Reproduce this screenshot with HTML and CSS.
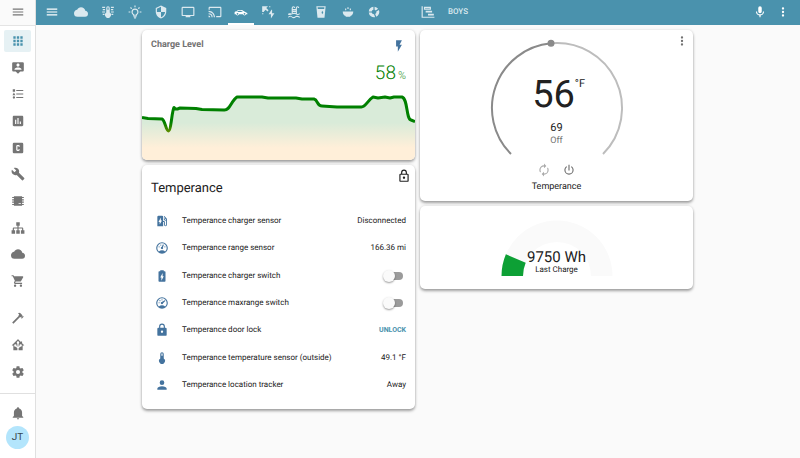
FILE: index.html
```html
<!DOCTYPE html>
<html lang="en">
<head>
<meta charset="utf-8">
<title>Temperance</title>
<meta name="viewport" content="width=device-width, initial-scale=1">
<link rel="stylesheet" href="styles.css">
</head>
<body>
<svg class="sprite" aria-hidden="true">
  <symbol id="menu" viewBox="0 0 24 24"><path d="M3,6H21V8H3V6M3,11H21V13H3V11M3,16H21V18H3V16Z"/></symbol>
  <symbol id="cloud" viewBox="0 0 24 24"><path d="M19.35,10.03C18.67,6.59 15.64,4 12,4C9.11,4 6.6,5.64 5.35,8.03C2.34,8.36 0,10.9 0,14A6,6 0 0,0 6,20H19A5,5 0 0,0 24,15C24,12.36 21.95,10.22 19.35,10.03Z"/></symbol>
  <symbol id="dots" viewBox="0 0 24 24"><path d="M12,16A2,2 0 0,1 14,18A2,2 0 0,1 12,20A2,2 0 0,1 10,18A2,2 0 0,1 12,16M12,10A2,2 0 0,1 14,12A2,2 0 0,1 12,14A2,2 0 0,1 10,12A2,2 0 0,1 12,10M12,4A2,2 0 0,1 14,6A2,2 0 0,1 12,8A2,2 0 0,1 10,6A2,2 0 0,1 12,4Z"/></symbol>
  <symbol id="gauge" viewBox="0 0 24 24"><path d="M12,2A10,10 0 0,0 2,12A10,10 0 0,0 12,22A10,10 0 0,0 22,12A10,10 0 0,0 12,2M12,4A8,8 0 0,1 20,12C20,14.4 19,16.5 17.3,18C15.9,16.7 14,16 12,16C10,16 8.2,16.7 6.7,18C5,16.5 4,14.4 4,12A8,8 0 0,1 12,4M14,5.89C13.62,5.9 13.26,6.15 13.1,6.54L11.81,9.77L11.71,10C11,10.13 10.41,10.6 10.14,11.26C9.73,12.29 10.23,13.45 11.26,13.86C12.29,14.27 13.45,13.77 13.86,12.74C14.12,12.08 14,11.32 13.57,10.76L13.67,10.5L14.96,7.29L14.97,7.26C15.17,6.75 14.92,6.17 14.41,5.96C14.28,5.91 14.15,5.89 14,5.89M10,6A1,1 0 0,0 9,7A1,1 0 0,0 10,8A1,1 0 0,0 11,7A1,1 0 0,0 10,6M7,9A1,1 0 0,0 6,10A1,1 0 0,0 7,11A1,1 0 0,0 8,10A1,1 0 0,0 7,9M17,9A1,1 0 0,0 16,10A1,1 0 0,0 17,11A1,1 0 0,0 18,10A1,1 0 0,0 17,9Z"/></symbol>
  <symbol id="gauge-max" viewBox="0 0 24 24"><path d="M12,2A10,10 0 0,0 2,12A10,10 0 0,0 12,22A10,10 0 0,0 22,12A10,10 0 0,0 12,2M12,4A8,8 0 0,1 20,12C20,14.4 19,16.5 17.3,18C15.9,16.7 14,16 12,16C10,16 8.2,16.7 6.7,18C5,16.5 4,14.4 4,12A8,8 0 0,1 12,4M16.6,7.4L11.6,10.1A2,2 0 1,0 13.8,12.3L17.6,8.7A0.9,0.9 0 0,0 16.6,7.4M12,5.500A1,1 0 0,0 12,7.500A1,1 0 0,0 12,5.500M8.500,7A1,1 0 0,0 8.500,9A1,1 0 0,0 8.500,7M7,10.500A1,1 0 0,0 7,12.500A1,1 0 0,0 7,10.500Z"/></symbol>
</svg>

<div class="app">
  <aside class="sidebar">
    <button class="side-menu" type="button" aria-label="Toggle sidebar"><svg class="icon"><use href="#menu"/></svg></button>
    <nav class="side-main" aria-label="Main">
      <a class="side-item selected" href="#" aria-label="Overview"><svg class="icon" viewBox="0 0 24 24"><path d="M16,20H20V16H16M16,14H20V10H16M10,8H14V4H10M16,8H20V4H16M10,14H14V10H10M4,14H8V10H4M4,20H8V16H4M10,20H14V16H10M4,8H8V4H4V8Z"/></svg></a>
      <a class="side-item" href="#" aria-label="Map"><svg class="icon" viewBox="0 0 24 24"><path d="M20,2H4A2,2 0 0,0 2,4V16A2,2 0 0,0 4,18H8L12,22L16,18H20A2,2 0 0,0 22,16V4A2,2 0 0,0 20,2M12,4.3C13.5,4.3 14.7,5.5 14.7,7C14.7,8.5 13.5,9.7 12,9.7C10.5,9.7 9.3,8.5 9.3,7C9.3,5.5 10.5,4.3 12,4.3M18,15H6V14.1C6,12.1 10,11 12,11C14,11 18,12.1 18,14.1V15Z"/></svg></a>
      <a class="side-item" href="#" aria-label="Logbook"><svg class="icon" viewBox="0 0 24 24"><path d="M5,9.5L7.500,14H2.500L5,9.500M3,4H7V8H3V4M5,20A2,2 0 0,0 7,18A2,2 0 0,0 5,16A2,2 0 0,0 3,18A2,2 0 0,0 5,20M9,5V7H21V5H9M9,19H21V17H9V19M9,13H21V11H9V13Z"/></svg></a>
      <a class="side-item" href="#" aria-label="History"><svg class="icon" viewBox="0 0 24 24"><path d="M9,17H7V10H9V17M13,17H11V7H13V17M17,17H15V13H17V17M19,3H5C3.9,3 3,3.9 3,5V19C3,20.1 3.9,21 5,21H19C20.1,21 21,20.1 21,19V5C21,3.9 20.1,3 19,3Z"/></svg></a>
      <a class="side-item" href="#" aria-label="Community"><svg class="icon" viewBox="0 0 24 24"><path d="M5,3A2,2 0 0,0 3,5V19A2,2 0 0,0 5,21H19A2,2 0 0,0 21,19V5A2,2 0 0,0 19,3H5M11,7H13A2,2 0 0,1 15,9V10H13V9H11V15H13V14H15V15A2,2 0 0,1 13,17H11A2,2 0 0,1 9,15V9A2,2 0 0,1 11,7Z"/></svg></a>
      <a class="side-item" href="#" aria-label="Tools"><svg class="icon" viewBox="0 0 24 24"><path d="M22.7,19L13.6,9.9C14.5,7.6 14,4.9 12.1,3C10.1,1 7.1,0.6 4.7,1.7L9,6L6,9L1.6,4.7C0.4,7.1 0.9,10.1 2.9,12.1C4.8,14 7.5,14.5 9.8,13.6L18.9,22.7C19.3,23.1 19.9,23.1 20.3,22.7L22.6,20.4C23.1,20 23.1,19.3 22.7,19Z"/></svg></a>
      <a class="side-item" href="#" aria-label="Hardware"><svg class="icon" viewBox="0 0 24 24"><path d="M5,4H19V5H22V7H19V9H22V11H19V13H22V15H19V17H22V19H19V20H5V19H2V17H5V15H2V13H5V11H2V9H5V7H2V5H5ZM13,16V17H17V16Z"/></svg></a>
      <a class="side-item" href="#" aria-label="Network"><svg class="icon" viewBox="0 0 24 24"><path d="M9,2V8H11V11H5C3.89,11 3,11.89 3,13V16H1V22H7V16H5V13H11V16H9V22H15V16H13V13H19V16H17V22H23V16H21V13C21,11.89 20.11,11 19,11H13V8H15V2H9Z"/></svg></a>
      <a class="side-item" href="#" aria-label="Cloud"><svg class="icon"><use href="#cloud"/></svg></a>
      <a class="side-item" href="#" aria-label="Shopping list"><svg class="icon" viewBox="0 0 24 24"><path d="M17,18C15.89,18 15,18.89 15,20A2,2 0 0,0 17,22A2,2 0 0,0 19,20C19,18.89 18.1,18 17,18M1,2V4H3L6.6,11.59L5.24,14.04C5.09,14.32 5,14.65 5,15A2,2 0 0,0 7,17H19V15H7.42A0.25,0.25 0 0,1 7.17,14.75C7.17,14.7 7.18,14.66 7.2,14.63L8.1,13H15.55C16.3,13 16.96,12.58 17.3,11.97L20.88,5.5C20.95,5.34 21,5.17 21,5A1,1 0 0,0 20,4H5.21L4.27,2M7,18C5.89,18 5,18.89 5,20A2,2 0 0,0 7,22A2,2 0 0,0 9,20C9,18.89 8.1,18 7,18Z"/></svg></a>
    </nav>
    <nav class="side-tools" aria-label="System">
      <a class="side-item" href="#" aria-label="Developer tools"><svg class="icon" viewBox="0 0 24 24"><path d="M2,19.63L13.43,8.2L12.72,7.5L14.14,6.07L12,3.89C13.2,2.7 15.09,2.7 16.27,3.89L19.87,7.5L18.45,8.91H21.29L22,9.62L18.45,13.21L17.74,12.5V9.62L16.27,11.04L15.56,10.33L4.13,21.76L2,19.63Z"/></svg></a>
      <a class="side-item" href="#" aria-label="Supervisor"><svg class="icon" viewBox="0 0 24 24"><path d="M21.8,13H20V21H13V17.67L15.79,14.88L16.5,15C17.66,15 18.6,14.06 18.6,12.9C18.6,11.74 17.66,10.8 16.5,10.8A2.1,2.1 0 0,0 14.4,12.9L14.5,13.61L13,15.13V9.65C13.66,9.29 14.1,8.6 14.1,7.8A2.1,2.1 0 0,0 12,5.7A2.1,2.1 0 0,0 9.9,7.8C9.9,8.6 10.34,9.29 11,9.65V15.13L9.5,13.61L9.6,12.9A2.1,2.1 0 0,0 7.5,10.8A2.1,2.1 0 0,0 5.4,12.9A2.1,2.1 0 0,0 7.5,15L8.21,14.88L11,17.67V21H4V13H2.25C1.83,13 1.42,13 1.42,12.79C1.43,12.57 1.85,12.15 2.28,11.72L11,3C11.33,2.67 11.67,2.33 12,2.33C12.33,2.33 12.67,2.67 13,3L17,7V6H19V9L21.78,11.78C22.18,12.18 22.59,12.59 22.6,12.8C22.6,13 22.2,13 21.8,13Z"/></svg></a>
      <a class="side-item" href="#" aria-label="Configuration"><svg class="icon" viewBox="0 0 24 24"><path d="M12,15.5A3.5,3.5 0 0,1 8.5,12A3.5,3.5 0 0,1 12,8.5A3.5,3.5 0 0,1 15.5,12A3.5,3.5 0 0,1 12,15.5M19.43,12.97C19.47,12.65 19.5,12.33 19.5,12C19.5,11.67 19.47,11.34 19.43,11L21.54,9.37C21.73,9.22 21.78,8.95 21.66,8.73L19.66,5.27C19.54,5.05 19.27,4.96 19.05,5.05L16.56,6.05C16.04,5.66 15.5,5.32 14.87,5.07L14.5,2.42C14.46,2.18 14.25,2 14,2H10C9.75,2 9.54,2.18 9.5,2.42L9.13,5.07C8.5,5.32 7.96,5.66 7.44,6.05L4.95,5.05C4.73,4.96 4.46,5.05 4.34,5.27L2.34,8.73C2.21,8.95 2.27,9.22 2.46,9.37L4.57,11C4.53,11.34 4.5,11.67 4.5,12C4.5,12.33 4.53,12.65 4.57,12.97L2.46,14.63C2.27,14.78 2.21,15.05 2.34,15.27L4.34,18.73C4.46,18.95 4.73,19.03 4.95,18.95L7.44,17.94C7.96,18.34 8.5,18.68 9.13,18.93L9.5,21.58C9.54,21.82 9.75,22 10,22H14C14.25,22 14.46,21.82 14.5,21.58L14.87,18.93C15.5,18.67 16.04,18.34 16.56,17.94L19.05,18.95C19.27,19.03 19.54,18.95 19.66,18.73L21.66,15.27C21.78,15.05 21.73,14.78 21.54,14.63L19.43,12.97Z"/></svg></a>
    </nav>
    <div class="side-user">
      <button class="side-item" type="button" aria-label="Notifications"><svg class="icon" viewBox="0 0 24 24"><path d="M21,19V20H3V19L5,17V11C5,7.9 7.03,5.17 10,4.29C10,4.19 10,4.1 10,4A2,2 0 0,1 12,2A2,2 0 0,1 14,4C14,4.1 14,4.19 14,4.29C16.97,5.17 19,7.9 19,11V17L21,19M14,21A2,2 0 0,1 12,23A2,2 0 0,1 10,21"/></svg></button>
      <a class="avatar" href="#">JT</a>
    </div>
  </aside>

  <div class="page">
    <header class="toolbar">
      <button class="tool-button" type="button" aria-label="Menu"><svg class="icon"><use href="#menu"/></svg></button>
      <nav class="tabs" aria-label="Views">
        <a class="tab" href="#" aria-label="Weather"><svg class="icon"><use href="#cloud"/></svg></a>
        <a class="tab" href="#" aria-label="Climate"><svg class="icon" viewBox="0 0 24 24"><path d="M15,13V5A3,3 0 0,0 9,5V13A5,5 0 1,0 15,13M12,4A1,1 0 0,1 13,5V8H11V5A1,1 0 0,1 12,4M2,3H7V5H2ZM3,7H7V9H3ZM2,11H7V13H2ZM3,15H6V17H3ZM17,3H22V5H17ZM17,7H21V9H17ZM17,11H22V13H17ZM18,15H21V17H18Z"/></svg></a>
        <a class="tab" href="#" aria-label="Lights"><svg class="icon" viewBox="0 0 24 24"><path d="M20,11H23V13H20V11M1,11H4V13H1V11M13,1V4H11V1H13M4.92,3.5L7.05,5.64L5.63,7.05L3.5,4.93L4.92,3.5M16.95,5.63L19.07,3.5L20.5,4.93L18.37,7.05L16.95,5.63M12,6A6,6 0 0,1 18,12C18,14.22 16.79,16.16 15,17.2V19A1,1 0 0,1 14,20H10A1,1 0 0,1 9,19V17.2C7.21,16.16 6,14.22 6,12A6,6 0 0,1 12,6M14,21V22A1,1 0 0,1 13,23H11A1,1 0 0,1 10,22V21H14M11,18H13V15.87C14.73,15.43 16,13.86 16,12A4,4 0 0,0 12,8A4,4 0 0,0 8,12C8,13.86 9.27,15.43 11,15.87V18Z"/></svg></a>
        <a class="tab" href="#" aria-label="Security"><svg class="icon" viewBox="0 0 24 24"><path d="M12,12H19C18.47,16.11 15.72,19.78 12,20.92V12H5V6.3L12,3.19M12,1L3,5V11C3,16.55 6.84,21.73 12,23C17.16,21.73 21,16.55 21,11V5L12,1Z"/></svg></a>
        <a class="tab" href="#" aria-label="Television"><svg class="icon" viewBox="0 0 24 24"><path d="M21,17H3V5H21M21,3H3A2,2 0 0,0 1,5V17A2,2 0 0,0 3,19H8V21H16V19H21A2,2 0 0,0 23,17V5A2,2 0 0,0 21,3Z"/></svg></a>
        <a class="tab" href="#" aria-label="Cast"><svg class="icon" viewBox="0 0 24 24"><path d="M1,10V12A9,9 0 0,1 10,21H12C12,14.92 7.07,10 1,10M1,14V16A5,5 0 0,1 6,21H8A7,7 0 0,0 1,14M1,18V21H4A3,3 0 0,0 1,18M21,3H3C1.89,3 1,3.89 1,5V8H3V5H21V19H14V21H21A2,2 0 0,0 23,19V5C23,3.89 22.1,3 21,3Z"/></svg></a>
        <a class="tab current" href="#" aria-label="Car" aria-current="page"><svg class="icon" viewBox="0 0 24 24"><path d="M12,8.5H7L4,11H3C1.89,11 1,11.89 1,13V16H3.17C3.6,17.2 4.73,18 6,18C7.27,18 8.4,17.2 8.82,16H15.17C15.6,17.2 16.73,18 18,18C19.27,18 20.4,17.2 20.82,16H23V15C23,13.89 21.97,13.53 21,13L17,10.500C15.500,9.200 14,8.500 12,8.500M5.25,12L7.5,10H11.5L15.5,12H5.25M6,13.5A1.5,1.5 0 0,1 6,16.5A1.5,1.5 0 0,1 6,13.5M18,13.5A1.5,1.5 0 0,1 18,16.5A1.5,1.5 0 0,1 18,13.5Z"/></svg></a>
        <a class="tab" href="#" aria-label="Energy"><svg class="icon" viewBox="0 0 24 24"><path d="M2,2H12L9,5L13,9L11,11L8,8L5,11V12H2ZM2,14H4V16H2ZM14,2H16V4H14ZM18,8L13,16H17V23L23,14H19V8Z"/></svg></a>
        <a class="tab" href="#" aria-label="Pool"><svg class="icon" viewBox="0 0 24 24"><path d="M2,15C4,14 6,14 8,15V5A3,3 0 0,1 14,5H12A1,1 0 0,0 10,5V7H15V5A3,3 0 0,1 21,5H19A1,1 0 0,0 17,5V15C19,16 20,15 22,14V16C19,18 17,17 15,16C13,15 11,15 9,16C6,18 4,17 2,17ZM10,9V10H15V9ZM10,12V14C12,13 13,13 15,14V12ZM2,20C4,18 7,18 9,20C11,21 13,21 15,19C18,18 19,19 22,20V22C19,21 18,20 15,21C13,23 10,23 8,21C6,20 4,20 2,22Z"/></svg></a>
        <a class="tab" href="#" aria-label="Drinks"><svg class="icon" viewBox="0 0 24 24"><path fill-rule="evenodd" d="M4,2H20L18,22H6ZM6.200,4L6.500,7H17.500L17.800,4ZM14,10L13,13L14,16L16,13Z"/></svg></a>
        <a class="tab" href="#" aria-label="Food"><svg class="icon" viewBox="0 0 24 24"><path d="M3,11H21C21,15 19,18 16,19V20H8V19C5,18 3,15 3,11ZM11,4H13V7H11ZM7,6H9V9H7ZM15,6H17V9H15Z"/></svg></a>
        <a class="tab" href="#" aria-label="Usage"><svg class="icon" viewBox="0 0 24 24"><path d="M11,3V8A4,4 0 0,0 8,11H3A9,9 0 0,1 11,3M13,3A9,9 0 0,1 19,6.500L15,9.500A4,4 0 0,0 13,8ZM20.500,8.500A9,9 0 0,1 16,20L14,15.500A4,4 0 0,0 16,11ZM3,13H8A4,4 0 0,0 12,16L14,20.800A9,9 0 0,1 3,13Z"/></svg></a>
        <a class="tab" href="#" aria-label="Blank"></a>
        <a class="tab" href="#" aria-label="Timeline"><svg class="icon" viewBox="0 0 24 24"><path d="M1,2H3V20H23V22H1ZM5,3H17V8H5ZM7,5V6H15V5ZM8,10H19V13H8ZM12,15H22V18H12Z"/></svg></a>
        <a class="tab" href="#">BOYS</a>
      </nav>
      <button class="tool-button" type="button" aria-label="Voice"><svg class="icon" viewBox="0 0 24 24"><path d="M12,2A3,3 0 0,1 15,5V11A3,3 0 0,1 12,14A3,3 0 0,1 9,11V5A3,3 0 0,1 12,2M19,11C19,14.53 16.39,17.44 13,17.93V21H11V17.93C7.61,17.44 5,14.53 5,11H7A5,5 0 0,0 12,16A5,5 0 0,0 17,11H19Z"/></svg></button>
      <button class="tool-button" type="button" aria-label="More"><svg class="icon"><use href="#dots"/></svg></button>
    </header>

    <main class="board">
      <div class="column">
        <section class="card level">
          <div class="level-head">
            <h2 class="level-title">Charge Level</h2>
            <svg class="icon accent" viewBox="0 0 24 24"><path d="M7,2V13H10V22L17,10H13L17,2H7Z"/></svg>
          </div>
          <p class="level-value">58<span class="level-unit">%</span></p>
          <svg class="chart" viewBox="0 0 273 68" preserveAspectRatio="none" role="img" aria-label="Charge level history">
            <defs>
              <linearGradient id="area" x1="0" y1="0" x2="0" y2="68" gradientUnits="userSpaceOnUse">
                <stop offset="0" stop-color="#d9ebd9"/><stop offset=".45" stop-color="#d9ebd9"/><stop offset=".82" stop-color="#ffefd9"/>
              </linearGradient>
              <linearGradient id="line" x1="0" y1="0" x2="0" y2="68" gradientUnits="userSpaceOnUse">
                <stop offset="0" stop-color="#008000"/><stop offset=".45" stop-color="#008000"/><stop offset=".82" stop-color="#ffa500"/>
              </linearGradient>
            </defs>
            <path fill="url(#area)" d="M0,25.500L6,26.500L20,27C23,28 24,39 26.500,39C29,39 30,18 32,15.500C34,18 35,17 38,16L54,16.500L60,17.500L82,18C88,18.500 89,9 95,5L120,5L126,6L154,6L160,7L172,7C176,8 175,14 180,14L195,15L219,15C223,16 226,8 231,5L236,6L243,5L248,6L252,5H260C266,7 264,27 269,28L273,29.500V68H0Z"/>
            <path fill="none" stroke="url(#line)" stroke-width="3" stroke-linejoin="round" d="M0,25.500L6,26.500L20,27C23,28 24,39 26.500,39C29,39 30,18 32,15.500C34,18 35,17 38,16L54,16.500L60,17.500L82,18C88,18.500 89,9 95,5L120,5L126,6L154,6L160,7L172,7C176,8 175,14 180,14L195,15L219,15C223,16 226,8 231,5L236,6L243,5L248,6L252,5H260C266,7 264,27 269,28L273,29.500"/>
          </svg>
        </section>

        <section class="card entities">
          <div class="entities-head">
            <h2 class="entities-title">Temperance</h2>
            <svg class="icon lock" viewBox="0 0 24 24"><path d="M12,17C10.89,17 10,16.1 10,15C10,13.89 10.89,13 12,13A2,2 0 0,1 14,15A2,2 0 0,1 12,17M18,20V10H6V20H18M18,8A2,2 0 0,1 20,10V20A2,2 0 0,1 18,22H6C4.89,22 4,21.1 4,20V10C4,8.89 4.89,8 6,8H7V6A5,5 0 0,1 12,1A5,5 0 0,1 17,6V8H18M12,3A3,3 0 0,0 9,6V8H15V6A3,3 0 0,0 12,3Z"/></svg>
          </div>
          <ul class="rows">
            <li class="row"><svg class="icon accent" viewBox="0 0 24 24"><path d="M19.77,7.23L19.78,7.22L16.06,3.5L15,4.56L17.11,6.67C16.17,7.03 15.5,7.93 15.5,9A2.5,2.5 0 0,0 18,11.5C18.36,11.5 18.69,11.42 19,11.29V18.5A1,1 0 0,1 18,19.5A1,1 0 0,1 17,18.5V14A2,2 0 0,0 15,12H14V5A2,2 0 0,0 12,3H6A2,2 0 0,0 4,5V21H14V13.5H15.5V18.5A2.5,2.5 0 0,0 18,21A2.5,2.5 0 0,0 20.5,18.5V9C20.5,8.31 20.22,7.68 19.77,7.23M18,10A1,1 0 0,1 17,9A1,1 0 0,1 18,8A1,1 0 0,1 19,9A1,1 0 0,1 18,10M8,18V13.5H6L10,6V11H12L8,18Z"/></svg><span class="name">Temperance charger sensor</span><span>Disconnected</span></li>
            <li class="row"><svg class="icon accent"><use href="#gauge"/></svg><span class="name">Temperance range sensor</span><span>166.36 mi</span></li>
            <li class="row"><svg class="icon accent" viewBox="0 0 24 24"><path d="M16.67,4H15V2H9V4H7.33A1.33,1.33 0 0,0 6,5.33V20.67C6,21.4 6.6,22 7.33,22H16.67A1.33,1.33 0 0,0 18,20.67V5.33C18,4.6 17.4,4 16.67,4M11,20V14.5H9L13,7V12.5H15L11,20"/></svg><label class="name" for="charger">Temperance charger switch</label><input class="switch" id="charger" type="checkbox" role="switch"></li>
            <li class="row"><svg class="icon accent"><use href="#gauge-max"/></svg><label class="name" for="maxrange">Temperance maxrange switch</label><input class="switch" id="maxrange" type="checkbox" role="switch"></li>
            <li class="row"><svg class="icon accent" viewBox="0 0 24 24"><path d="M12,17A2,2 0 0,0 14,15C14,13.89 13.1,13 12,13A2,2 0 0,0 10,15A2,2 0 0,0 12,17M18,8A2,2 0 0,1 20,10V20A2,2 0 0,1 18,22H6A2,2 0 0,1 4,20V10C4,8.89 4.9,8 6,8H7V6A5,5 0 0,1 12,1A5,5 0 0,1 17,6V8H18M12,3A3,3 0 0,0 9,6V8H15V6A3,3 0 0,0 12,3Z"/></svg><span class="name">Temperance door lock</span><button class="unlock" type="button">UNLOCK</button></li>
            <li class="row"><svg class="icon accent" viewBox="0 0 24 24"><path d="M15,13V5A3,3 0 0,0 9,5V13A5,5 0 1,0 15,13M12,4A1,1 0 0,1 13,5V8H11V5A1,1 0 0,1 12,4Z"/></svg><span class="name">Temperance temperature sensor (outside)</span><span>49.1 °F</span></li>
            <li class="row"><svg class="icon accent" viewBox="0 0 24 24"><path d="M12,4A4,4 0 0,1 16,8A4,4 0 0,1 12,12A4,4 0 0,1 8,8A4,4 0 0,1 12,4M12,14C16.42,14 20,15.79 20,18V20H4V18C4,15.79 7.58,14 12,14Z"/></svg><span class="name">Temperance location tracker</span><span>Away</span></li>
          </ul>
        </section>
      </div>

      <div class="column">
        <section class="card thermostat">
          <button class="more" type="button" aria-label="More info"><svg class="icon"><use href="#dots"/></svg></button>
          <div class="dial">
            <svg class="dial-ring" viewBox="0 0 138 120" role="img" aria-label="Set point dial">
              <path class="ring-rest" d="M63,5.300A65,65 0 0 1 115,116"/>
              <path class="ring-set" d="M23,116A65,65 0 0 1 63,5.300"/>
              <circle class="ring-thumb" cx="63" cy="5.300" r="3.500"/>
            </svg>
            <div class="reading">
              <p class="now">56<sup class="degree">°F</sup></p>
              <p class="target">69</p>
              <p class="mode">Off</p>
            </div>
          </div>
          <div class="modes">
            <button class="mode-button auto" type="button" aria-label="Auto"><svg class="icon" viewBox="0 0 24 24"><path d="M12,6V9L16,5L12,1V4A8,8 0 0,0 4,12C4,13.57 4.46,15.03 5.24,16.26L6.7,14.8C6.25,13.97 6,13 6,12A6,6 0 0,1 12,6M18.76,7.74L17.3,9.2C17.74,10.04 18,11 18,12A6,6 0 0,1 12,18V15L8,19L12,23V20A8,8 0 0,0 20,12C20,10.43 19.54,8.97 18.76,7.74Z"/></svg></button>
            <button class="mode-button" type="button" aria-label="Off"><svg class="icon" viewBox="0 0 24 24"><path d="M16.56,5.44L15.11,6.89C16.84,7.94 18,9.83 18,12A6,6 0 0,1 12,18A6,6 0 0,1 6,12C6,9.83 7.16,7.94 8.88,6.88L7.44,5.44C5.36,6.88 4,9.28 4,12A8,8 0 0,0 12,20A8,8 0 0,0 20,12C20,9.28 18.64,6.88 16.56,5.44M13,3H11V13H13"/></svg></button>
          </div>
          <h2 class="dial-name">Temperance</h2>
        </section>

        <section class="card energy">
          <svg class="meter" viewBox="0 0 112 56" role="img" aria-label="Last charge meter">
            <path fill="#fafafa" d="M0.500,56A55.500,55.500 0 0 1 111.500,56H90A34,34 0 0 0 22,56Z"/>
            <path fill="#0da035" d="M0.500,56A55.500,55.500 0 0 1 4.900,34.300L24.700,42.700A34,34 0 0 0 22,56Z"/>
          </svg>
          <div class="meter-text">
            <p class="meter-value">9750 Wh</p>
            <h2 class="meter-name">Last Charge</h2>
          </div>
        </section>
      </div>
    </main>
  </div>
</div>
</body>
</html>
```
FILE: styles.css
```css
* { box-sizing: border-box; }

body {
  margin: 0;
  background: #fafafa;
  color: #212121;
  font: 8px/12px Roboto, sans-serif;
  text-rendering: geometricPrecision;
}

h2, p, ul { margin: 0; padding: 0; font-weight: 400; }
a { color: inherit; text-decoration: none; }
button { display: flex; padding: 0; border: 0; background: none; color: inherit; font: inherit; }

.sprite { display: none; }
.icon { display: block; flex: none; width: 14px; height: 14px; fill: currentColor; }
.accent { color: #44739e; }

.app { display: flex; min-height: 100vh; }

/* Sidebar */
.sidebar {
  display: flex;
  flex: none;
  flex-direction: column;
  width: 36px;
  border-right: 1px solid #e0e0e0;
  background: #fff;
  color: #757575;
}
.side-menu {
  align-items: center;
  justify-content: center;
  height: 26px;
  padding-bottom: 2px;
  border-bottom: 1px solid #e4e4e4;
  background: #fafafa;
}
.side-main {
  display: flex;
  flex: 1;
  flex-direction: column;
  justify-content: space-between;
  padding: 4px 4px 15px;
}
.side-tools { display: flex; flex-direction: column; gap: 5px; padding: 0 4px 10px; }
.side-item { display: flex; align-items: center; justify-content: center; height: 22px; border-radius: 2px; }
.side-item.selected { background: #e6f1f4; color: #4a92ad; }
.side-user {
  display: flex;
  flex-direction: column;
  align-items: center;
  gap: 2px;
  padding: 8px 0 9px;
  border-top: 1px solid #e0e0e0;
}
.avatar {
  display: grid;
  place-items: center;
  width: 23px;
  height: 23px;
  border-radius: 50%;
  background: #b3e5fc;
  color: #37474f;
  font-size: 10px;
}

/* Top bar */
.page { flex: 1; min-width: 0; }
.toolbar { display: flex; height: 25px; padding: 0 6px 0 4px; background: #4a92ad; color: #fff; }
.tool-button { align-items: center; justify-content: center; width: 23px; padding-bottom: 1px; }
.tabs { display: grid; grid-template-columns: repeat(14, 1fr) 34px; width: 407px; margin: 0 auto 0 5px; }
.tab {
  display: flex;
  align-items: center;
  justify-content: center;
  border-top: 1px solid transparent;
  border-bottom: 2px solid transparent;
  color: #dbe9ef;
  font-weight: 500;
}
.tab.current { border-bottom-color: #fff; color: #fff; }

/* Cards */
.board {
  display: grid;
  grid-template-columns: 1fr 1fr;
  align-items: start;
  gap: 5px;
  max-width: 552px;
  margin: 0 auto;
  padding: 5px 1px 5px 0;
}
.column { display: grid; gap: 5px; }
.card {
  position: relative;
  overflow: hidden;
  border-radius: 5px;
  background: #fff;
  box-shadow: 0 2px 3px rgba(0, 0, 0, .35), 0 0 3px rgba(0, 0, 0, .1);
}

.level-head { display: flex; justify-content: space-between; padding: 9px 9px 0; }
.level-title { color: #727272; font-size: 9px; font-weight: 700; }
.level-value { padding: 8px 9px 0 0; color: #008000; font-size: 19px; font-weight: 300; line-height: 24px; text-align: right; }
.level-unit { margin-left: 2px; font-size: 11px; font-weight: 400; opacity: .6; }
.chart { display: block; width: 100%; height: 68px; margin-top: 4px; }

.entities { padding: 4px 9px 10px; }
.entities-head { display: flex; justify-content: space-between; padding-bottom: 8px; }
.entities-title { padding-top: 10px; font-size: 13px; line-height: 20px; }
.lock { margin-right: -5px; }
.rows { display: grid; grid-auto-rows: 1fr; min-height: 192px; list-style: none; }
.row { display: flex; align-items: center; padding-left: 4px; }
.name { flex: 1; padding-left: 13px; }
.switch {
  position: relative;
  width: 18px;
  height: 8px;
  margin: 0 3px;
  border-radius: 4px;
  background: #9b9b9b;
  appearance: none;
}
.switch::before {
  position: absolute;
  top: -2px;
  left: -2px;
  width: 12px;
  height: 12px;
  border-radius: 50%;
  background: #fafafa;
  box-shadow: 0 1px 2px rgba(0, 0, 0, .4);
  content: "";
}
.unlock { color: #4a92ad; font-size: 7px; font-weight: 700; }

.thermostat { padding: 8px 0; }
.more { position: absolute; top: 4px; right: 4px; color: #727272; }
.dial { display: grid; justify-content: center; }
.dial-ring, .reading { grid-area: 1 / 1; }
.dial-ring { width: 138px; height: 120px; fill: none; stroke-width: 2; }
.ring-set { stroke: #8a8a8a; }
.ring-rest { stroke: #bdbdbd; }
.ring-thumb { fill: #8a8a8a; }
.reading { padding-top: 34px; text-align: center; }
.now { padding-right: 6px; font-size: 38px; line-height: 46px; }
.degree { position: absolute; padding-top: 6px; font-size: 11px; line-height: 12px; }
.target { padding-top: 3px; font-size: 11px; line-height: 14px; }
.mode { color: #727272; font-size: 9px; }
.modes { display: flex; justify-content: center; gap: 11px; padding-top: 5px; color: #727272; }
.auto { color: #aaa; }
.dial-name { padding-top: 4px; font-size: 9px; text-align: center; }

.energy { display: grid; justify-items: center; padding: 14px 0 13px; }
.meter { grid-area: 1 / 1; width: 112px; height: 56px; }
.meter-text { grid-area: 1 / 1; align-self: end; text-align: center; }
.meter-value { font-size: 15px; line-height: 14px; }
.meter-name { font-size: 8px; line-height: 12px; }
```
